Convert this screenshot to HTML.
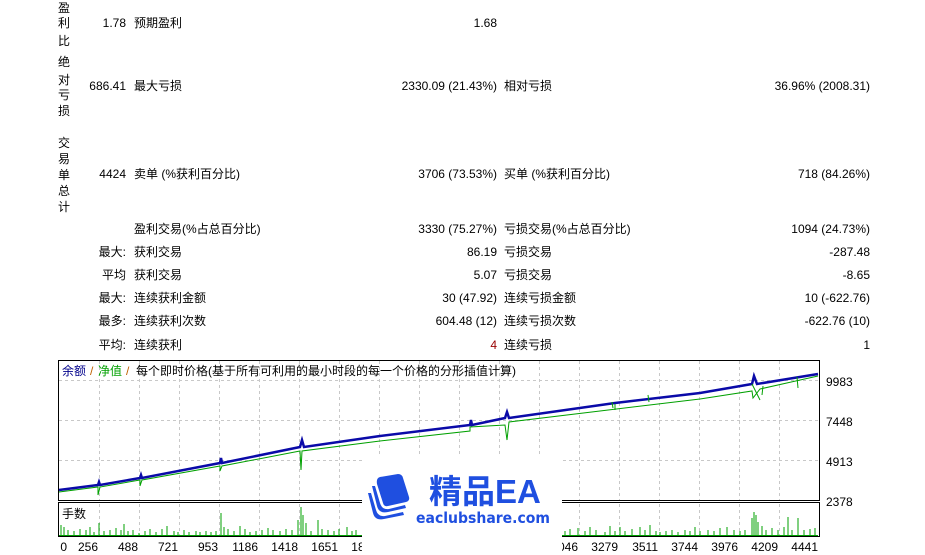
<!DOCTYPE html>
<html><head><meta charset="utf-8"><style>
body{margin:0;width:925px;height:555px;background:#fff;overflow:hidden;position:relative;font-family:"Liberation Sans","Noto Sans CJK SC",sans-serif;font-size:12px;color:#000}
.t{position:absolute;height:16px;line-height:16px;white-space:nowrap}
.r{text-align:right}
.v{position:absolute;left:56px;width:16px;text-align:center;line-height:16px}
</style></head><body>
<div class="v" style="top:0">盈</div><div class="v" style="top:15px">利</div><div class="v" style="top:33px">比</div>
<div class="v" style="top:54px">绝</div><div class="v" style="top:72px">对</div><div class="v" style="top:87px">亏</div><div class="v" style="top:103px">损</div>
<div class="v" style="top:135px">交</div><div class="v" style="top:151px">易</div><div class="v" style="top:167px">单</div><div class="v" style="top:183px">总</div><div class="v" style="top:199px">计</div>

<div class="t r" style="top:15px;right:799px">1.78</div><div class="t" style="top:15px;left:134px">预期盈利</div><div class="t r" style="top:15px;right:428px">1.68</div>
<div class="t r" style="top:78px;right:799px">686.41</div><div class="t" style="top:78px;left:134px">最大亏损</div><div class="t r" style="top:78px;right:428px">2330.09 (21.43%)</div><div class="t" style="top:78px;left:504px">相对亏损</div><div class="t r" style="top:78px;right:55px">36.96% (2008.31)</div>
<div class="t r" style="top:166px;right:799px">4424</div><div class="t" style="top:166px;left:134px">卖单 (%获利百分比)</div><div class="t r" style="top:166px;right:428px">3706 (73.53%)</div><div class="t" style="top:166px;left:504px">买单 (%获利百分比)</div><div class="t r" style="top:166px;right:55px">718 (84.26%)</div>

<div class="t" style="top:221px;left:134px">盈利交易(%占总百分比)</div><div class="t r" style="top:221px;right:428px">3330 (75.27%)</div><div class="t" style="top:221px;left:504px">亏损交易(%占总百分比)</div><div class="t r" style="top:221px;right:55px">1094 (24.73%)</div>
<div class="t r" style="top:244px;right:799px">最大:</div><div class="t" style="top:244px;left:134px">获利交易</div><div class="t r" style="top:244px;right:428px">86.19</div><div class="t" style="top:244px;left:504px">亏损交易</div><div class="t r" style="top:244px;right:55px">-287.48</div>
<div class="t r" style="top:267px;right:799px">平均</div><div class="t" style="top:267px;left:134px">获利交易</div><div class="t r" style="top:267px;right:428px">5.07</div><div class="t" style="top:267px;left:504px">亏损交易</div><div class="t r" style="top:267px;right:55px">-8.65</div>
<div class="t r" style="top:290px;right:799px">最大:</div><div class="t" style="top:290px;left:134px">连续获利金额</div><div class="t r" style="top:290px;right:428px">30 (47.92)</div><div class="t" style="top:290px;left:504px">连续亏损金额</div><div class="t r" style="top:290px;right:55px">10 (-622.76)</div>
<div class="t r" style="top:313px;right:799px">最多:</div><div class="t" style="top:313px;left:134px">连续获利次数</div><div class="t r" style="top:313px;right:428px">604.48 (12)</div><div class="t" style="top:313px;left:504px">连续亏损次数</div><div class="t r" style="top:313px;right:55px">-622.76 (10)</div>
<div class="t r" style="top:337px;right:799px">平均:</div><div class="t" style="top:337px;left:134px">连续获利</div><div class="t r" style="top:337px;right:428px;color:#900">4</div><div class="t" style="top:337px;left:504px">连续亏损</div><div class="t r" style="top:337px;right:55px">1</div>

<svg style="position:absolute;left:0;top:0" width="925" height="555" font-family="Liberation Sans,Noto Sans CJK SC,sans-serif" font-size="12">
<g stroke="#c8c8c8" stroke-dasharray="3,3" stroke-width="1">
<path d="M59 380.5H818M59 420.5H818M59 460.5H818"/>
<path d="M99.5 361V500M139.5 361V500M179.5 361V500M219.5 361V500M259.5 361V500M299.5 361V500M339.5 361V500M379.5 361V500M419.5 361V500M459.5 361V500M499.5 361V500M539.5 361V500M579.5 361V500M619.5 361V500M659.5 361V500M699.5 361V500M739.5 361V500M779.5 361V500"/>
<path d="M99.5 504V536M139.5 504V536M179.5 504V536M219.5 504V536M259.5 504V536M299.5 504V536M339.5 504V536M379.5 504V536M419.5 504V536M459.5 504V536M499.5 504V536M539.5 504V536M579.5 504V536M619.5 504V536M659.5 504V536M699.5 504V536M739.5 504V536M779.5 504V536"/>
</g>
<rect x="58.5" y="360.5" width="761" height="140" fill="none" stroke="#000"/>
<rect x="58.5" y="502.5" width="761" height="34" fill="none" stroke="#000"/>
<text x="62" y="375" fill="#00008b">余额</text><text x="90" y="375" fill="#c06000">/</text><text x="98" y="375" fill="#00a000">净值</text><text x="126" y="375" fill="#c06000">/</text><text x="136" y="375">每个即时价格(基于所有可利用的最小时段的每一个价格的分形插值计算)</text>
<path d="M59 492L98 487L98 495L100 487L140 480L140 486L142 480L220 466L220 471L222 466L300 451L301 470L302 451L380 441L470 431L470 427L505 425L507 440L509 422L600 411L700 399L752 391L753 398L760 389L818 376" fill="none" stroke="#00a000"/>
<path d="M59 490L98 485L99 482L100 485L140 478L141 475L142 478L220 463L221 458L222 463L300 447L302 440L304 447L380 436L470 425L471 420L472 425L505 418L507 412L509 418L615 403L700 393L752 384L754 376L757 384L818 374" fill="none" stroke="#0a0aa8" stroke-width="2.5"/>
<path d="M752 384L760 400M797 377L798 388M763 386L762 395M648 395L649 402M612 402L613 408M615 404L615 410" stroke="#00a000" fill="none"/>
<text x="62" y="518">手数</text>
<g stroke="#00a000" stroke-width="1">
<path d="M59 535.5H818"/>
<path d="M61 535V525M64 535V527M68 535V530M74 535V531M80 535V529M86 535V530M90 535V527M94 535V532M99 535V523M104 535V531M110 535V530M116 535V528M121 535V530M124 535V524M128 535V531M133 535V530M139 535V533M145 535V531M150 535V529M156 535V532M162 535V529M167 535V526M174 535V531M178 535V532M184 535V530M189 535V532M196 535V531M200 535V532M206 535V531M211 535V532M216 535V531M221 535V513M224 535V527M228 535V529M234 535V531M240 535V526M245 535V529M250 535V532M256 535V531M262 535V530M268 535V528M273 535V530M280 535V531M286 535V529M292 535V530M298 535V520M301 535V507M303 535V515M306 535V523M311 535V531M318 535V520M322 535V529M328 535V530M334 535V531M339 535V529M347 535V527M352 535V531M356 535V530"/>
<path d="M565 535V531M570 535V529M578 535V528M585 535V531M590 535V527M596 535V530M605 535V532M610 535V526M615 535V531M620 535V527M625 535V531M632 535V529M640 535V527M645 535V530M650 535V525M656 535V531M660 535V532M666 535V531M672 535V530M678 535V532M685 535V530M690 535V531M695 535V527M700 535V531M708 535V530M714 535V531M720 535V528M727 535V527M734 535V530M740 535V531M745 535V530M752 535V518M754 535V512M756 535V515M758 535V522M762 535V526M766 535V530M772 535V528M778 535V530M784 535V527M788 535V517M792 535V530M798 535V518M804 535V530M810 535V529M815 535V528"/>
</g>
<g fill="#000">
<text x="826" y="386">9983</text><text x="826" y="426">7448</text><text x="826" y="466">4913</text><text x="826" y="506">2378</text>
</g>
<g text-anchor="end">
<text x="67" y="551">0</text><text x="98" y="551">256</text><text x="138" y="551">488</text><text x="178" y="551">721</text><text x="218" y="551">953</text><text x="258" y="551">1186</text><text x="298" y="551">1418</text><text x="338" y="551">1651</text><text x="378" y="551">1883</text><text x="418" y="551">2116</text><text x="458" y="551">2348</text><text x="498" y="551">2581</text><text x="538" y="551">2814</text><text x="578" y="551">3046</text><text x="618" y="551">3279</text><text x="658" y="551">3511</text><text x="698" y="551">3744</text><text x="738" y="551">3976</text><text x="778" y="551">4209</text><text x="818" y="551">4441</text>
</g>
<rect x="362" y="455" width="200" height="100" fill="#fff"/>
<g fill="#1f4fe0">
<path d="M380 477L398 474Q402 474 403 478L409 497Q410 501 406 502L388 506Q384 507 383 503L377 484Q376 478 380 477Z"/>
<path d="M372 486L375 486L380 503Q382 510 389 509L405 505L406 508L388 512Q379 514 377 506Z"/>
<path d="M368 493L371 493L376 510Q378 517 385 516L403 512L404 515L384 519Q375 521 373 513Z"/>
</g>
<text x="429" y="503" font-size="33" font-weight="bold" fill="#1f4fe0">精品EA</text>
<text x="416" y="523" font-size="15" font-weight="bold" fill="#1f4fe0" font-family="DejaVu Sans,sans-serif" textLength="134" lengthAdjust="spacingAndGlyphs">eaclubshare.com</text>
</svg>
</body></html>
